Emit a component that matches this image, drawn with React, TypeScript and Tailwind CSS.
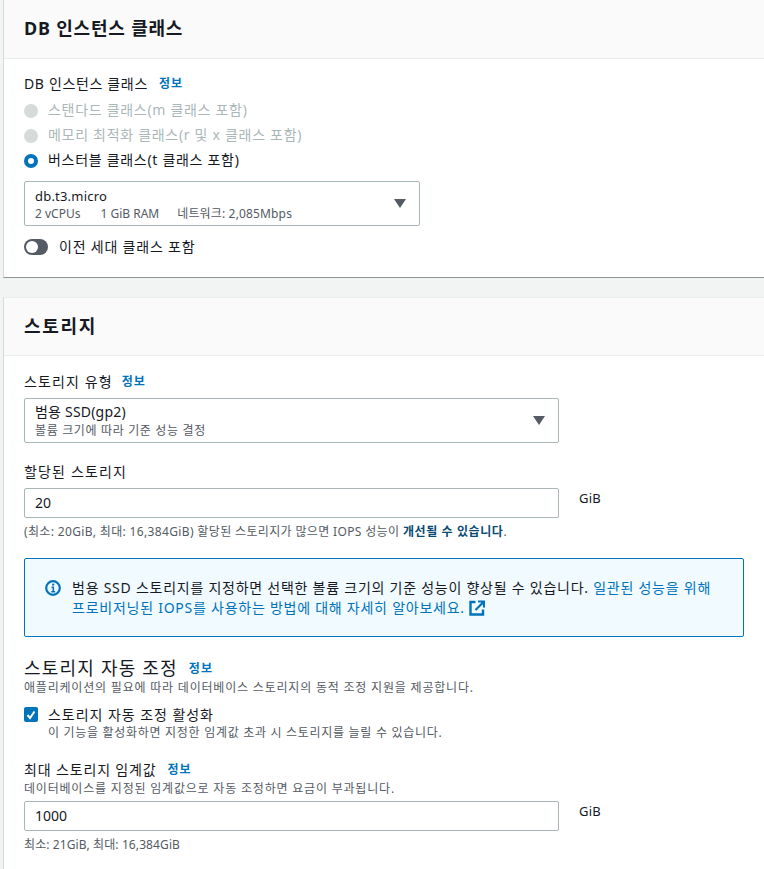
import React from 'react';

const InfoLink: React.FC<{ className?: string }> = ({ className = 'ml-[11px]' }) => (
    <span className={`${className} text-xs font-bold tracking-[1px] text-[#0073bb]`}>정보</span>
);

const Caret: React.FC = () => (
    <svg width="12" height="9" viewBox="0 0 12 9" className="shrink-0">
        <path d="M0 0h12L6 9z" fill="#545b64" />
    </svg>
);

const InfoIcon: React.FC = () => (
    <svg width="16" height="16" viewBox="0 0 16 16" fill="none" className="mt-[2px] shrink-0">
        <circle cx="8" cy="8" r="6.8" stroke="#0073bb" strokeWidth="2.2" />
        <path d="M6.5 7.2H8.3V11.8M6.3 11.8H10.2" stroke="#0073bb" strokeWidth="1.6" />
        <rect x="7.2" y="3.6" width="2" height="2" fill="#0073bb" />
    </svg>
);

const ExternalIcon: React.FC = () => (
    <svg width="16" height="16" viewBox="0 0 16 16" fill="none" className="ml-[4px] inline align-[-3px]">
        <path d="M6.5 2H1.5V14.5H14V9.5" stroke="#0073bb" strokeWidth="2.4" />
        <path d="M9 1.5H15V7.5M14.5 2L6.5 10" stroke="#0073bb" strokeWidth="2.2" />
    </svg>
);

const Radio: React.FC<{ label: string; checked?: boolean }> = ({ label, checked }) => (
    <div className="flex h-[25px] items-center">
        {checked ? (
            <span className="h-[14px] w-[14px] rounded-full border-[4px] border-[#0073bb] bg-white" />
        ) : (
            <span className="h-[14px] w-[14px] rounded-full bg-[#d5dbdb]" />
        )}
        <span className={`ml-[10px] pb-[2px] text-sm tracking-[0.7px] ${checked ? 'text-[#16191f]' : 'text-[#aab7b8]'}`}>{label}</span>
    </div>
);

const Header: React.FC<{ title: string; className: string; tracking: string }> = ({ title, className, tracking }) => (
    <div className={`flex items-center border-b border-[#eaeded] bg-[#fafafa] px-5 ${className}`}>
        <h2 className={`-mt-[2px] text-lg leading-6 font-bold text-[#16191f] ${tracking}`}>{title}</h2>
    </div>
);

const Unit: React.FC = () => <span className="ml-5 pt-[1px] text-[13px] tracking-[0.2px] text-[#16191f]">GiB</span>;

export default function App() {
    return (
        <div
            className="h-[869px] overflow-hidden bg-[#f2f3f3] pl-[3px] text-[#16191f]"
            style={{ fontFamily: '"Noto Sans", "Noto Sans CJK KR", sans-serif' }}
        >
            {/* DB instance class */}
            <section className="h-[278px] border-b border-l border-b-[#879596] border-l-[#d5dbdb] bg-white">
                <Header title="DB 인스턴스 클래스" className="h-[59px]" tracking="tracking-[0.8px]" />
                <div className="px-5">
                    <div className="mt-[15px] flex h-5 items-center text-sm tracking-[0.65px]">
                        DB 인스턴스 클래스
                        <InfoLink />
                    </div>
                    <div className="mt-[4px]">
                        <Radio label="스탠다드 클래스(m 클래스 포함)" />
                        <Radio label="메모리 최적화 클래스(r 및 x 클래스 포함)" />
                        <Radio label="버스터블 클래스(t 클래스 포함)" checked />
                    </div>
                    <div className="mt-[8px] flex h-[45px] w-[396px] items-center justify-between rounded-[2px] border border-[#aab7b8] pr-[13px] pl-[10px]">
                        <div>
                            <div className="text-[13px] leading-[19px] tracking-[0.2px]">db.t3.micro</div>
                            <div className="flex gap-5 text-xs leading-[15px] text-[#545b64]">
                                <span>2 vCPUs</span>
                                <span>1 GiB RAM</span>
                                <span className="-ml-[2px] tracking-[0.15px]">네트워크: 2,085Mbps</span>
                            </div>
                        </div>
                        <Caret />
                    </div>
                    <div className="mt-[13px] flex h-4 items-center">
                        <span className="flex h-4 w-6 items-center rounded-full bg-[#545b64] pl-[2px]">
                            <span className="h-3 w-3 rounded-full bg-white" />
                        </span>
                        <span className="ml-[11px] text-sm tracking-[0.8px]">이전 세대 클래스 포함</span>
                    </div>
                </div>
            </section>

            {/* Storage */}
            <section className="mt-[19px] h-[600px] border-t border-l border-t-[#eaeded] border-l-[#d5dbdb] bg-white">
                <Header title="스토리지" className="h-[58px]" tracking="tracking-[1.7px]" />
                <div className="px-5">
                    <div className="mt-[16px] flex h-5 items-center text-sm tracking-[1.1px]">
                        스토리지 유형
                        <InfoLink className="ml-[9px]" />
                    </div>
                    <div className="mt-[6px] flex h-[45px] w-[535px] items-center justify-between rounded-[2px] border border-[#aab7b8] pr-[13px] pl-[10px]">
                        <div>
                            <div className="text-sm leading-[15px] tracking-[0.2px]">범용 SSD(gp2)</div>
                            <div className="mt-[4px] text-xs leading-[15px] tracking-[0.65px] text-[#545b64]">볼륨 크기에 따라 기준 성능 결정</div>
                        </div>
                        <Caret />
                    </div>
                    <div className="mt-[19px] flex h-5 items-center text-sm tracking-[1.15px]">할당된 스토리지</div>
                    <div className="mt-[6px] flex items-start">
                        <div className="flex h-[30px] w-[535px] items-center rounded-[2px] border border-[#aab7b8] px-[10px] text-sm">20</div>
                        <Unit />
                    </div>
                    <p className="mt-[6px] text-xs leading-4 tracking-[0.35px] text-[#545b64]">
                        (최소: 20GiB, 최대: 16,384GiB) 할당된 스토리지가 많으면 IOPS 성능이{' '}
                        <span className="font-bold tracking-[0.6px] text-[#0a4a74]">개선될 수 있습니다</span>.
                    </p>

                    <div className="mt-[18px] flex h-[79px] w-[720px] items-start rounded-[2px] border border-[#0073bb] bg-[#f1faff] pt-[19px] pl-[20px]">
                        <InfoIcon />
                        <p className="ml-[11px] text-sm leading-[20px] tracking-[0.75px]">
                            범용 SSD 스토리지를 지정하면 선택한 볼륨 크기의 기준 성능이 향상될 수 있습니다.{' '}
                            <span className="text-[#0073bb]">일관된 성능을 위해</span>
                            <br />
                            <span className="text-[#0073bb]">
                                프로비저닝된 IOPS를 사용하는 방법에 대해 자세히 알아보세요.
                                <ExternalIcon />
                            </span>
                        </p>
                    </div>

                    <div className="mt-[19px] flex h-6 items-center text-lg tracking-[1.2px]">
                        스토리지 자동 조정
                        <InfoLink className="mt-[2px] ml-[11px]" />
                    </div>
                    <p className="text-xs leading-[15px] tracking-[0.8px] text-[#545b64]">애플리케이션의 필요에 따라 데이터베이스 스토리지의 동적 조정 지원을 제공합니다.</p>

                    <div className="mt-[11px] flex items-start">
                        <span className="mt-[1px] flex h-[15px] w-[14px] items-center justify-center rounded-[2px] bg-[#0073bb]">
                            <svg width="10" height="10" viewBox="0 0 10 10" fill="none">
                                <path d="M1.5 5l2.5 3 4.5-6.5" stroke="white" strokeWidth="2" />
                            </svg>
                        </span>
                        <div className="ml-[10px]">
                            <div className="text-sm leading-[18px] tracking-[0.95px]">스토리지 자동 조정 활성화</div>
                            <div className="text-xs leading-[17px] tracking-[0.7px] text-[#545b64]">이 기능을 활성화하면 지정한 임계값 초과 시 스토리지를 늘릴 수 있습니다.</div>
                        </div>
                    </div>

                    <div className="mt-[19px] flex h-5 items-center text-sm tracking-[0.85px]">
                        최대 스토리지 임계값
                        <InfoLink />
                    </div>
                    <p className="text-xs leading-[17px] tracking-[0.8px] text-[#545b64]">데이터베이스를 지정된 임계값으로 자동 조정하면 요금이 부과됩니다.</p>
                    <div className="mt-[4px] flex items-start">
                        <div className="flex h-[30px] w-[535px] items-center rounded-[2px] border border-[#aab7b8] px-[10px] text-sm">1000</div>
                        <Unit />
                    </div>
                    <p className="mt-[6px] text-xs leading-4 tracking-[0.1px] text-[#545b64]">최소: 21GiB, 최대: 16,384GiB</p>
                </div>
            </section>
        </div>
    );
}
